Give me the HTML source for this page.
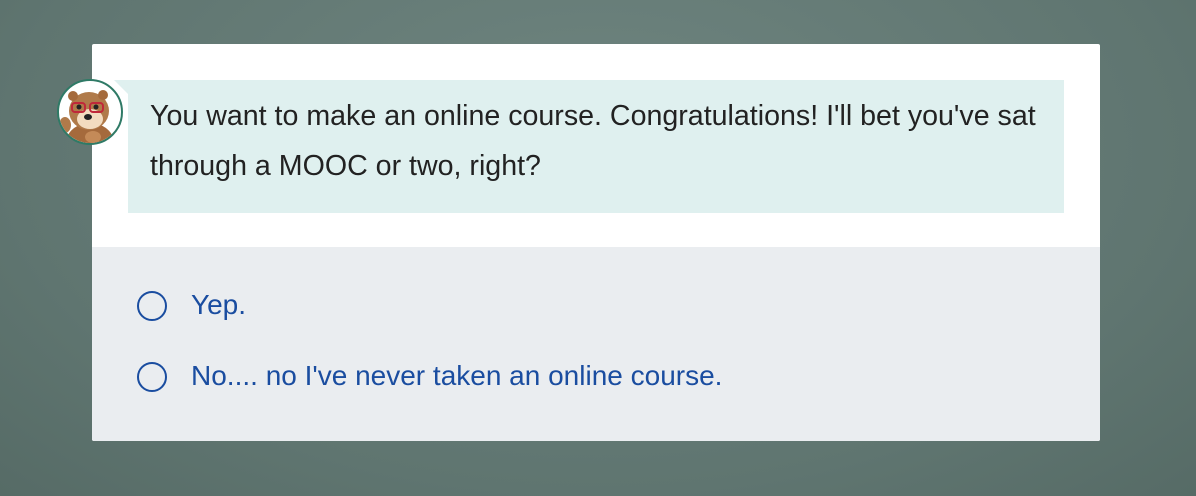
<!DOCTYPE html>
<html><head><style>
body{margin:0;width:1196px;height:496px;overflow:hidden;background:radial-gradient(ellipse at 50% 30%,#6f8580,#5f7570 70%,#566b66);font-family:"Liberation Sans",sans-serif;position:relative}
.card{position:absolute;left:92px;top:44px;width:1008px;height:397px;background:#fff;border-radius:2px;overflow:hidden}
.bottom{position:absolute;left:0;top:203px;width:1008px;height:194px;background:#eaedf0}
.bubble{position:absolute;left:36px;top:36px;width:936px;height:133px;background:#dff0ef}
.tail{position:absolute;left:22px;top:36px;width:0;height:0;border-top:14px solid #dff0ef;border-left:14px solid transparent}
.txt{position:absolute;left:58px;top:47px;width:910px;font-size:28.6px;line-height:50px;color:#222}
.av{position:absolute;left:57px;top:79px;width:62px;height:62px;border-radius:50%;border:2px solid #2f7a66;background:#fff;overflow:hidden}
.opt{position:absolute;left:137px;font-size:28px;color:#1a4da0}
.opt i{position:absolute;left:0;top:0;width:30px;height:30px;border:2px solid #1a4da0;border-radius:50%;box-sizing:border-box}
.opt span{position:absolute;left:54px;top:-2px;white-space:nowrap}
</style></head><body>
<div class="card">
<div class="tail"></div>
<div class="bubble"></div>
<div class="txt">You want to make an online course. Congratulations! I'll bet you've sat through a MOOC or two, right?</div>
<div class="bottom"></div>
</div>
<div class="av"><svg width="62" height="62" viewBox="0 0 62 62">
<ellipse cx="31" cy="62" rx="24" ry="20" fill="#a56a3c"/>
<ellipse cx="30" cy="30" rx="20" ry="19" fill="#b07a4a"/>
<circle cx="14" cy="15" r="5" fill="#a56a3c"/><circle cx="44" cy="14" r="5" fill="#a56a3c"/>
<ellipse cx="31" cy="38" rx="13" ry="10" fill="#f3dcc0"/>
<rect x="13" y="22" width="13" height="9" rx="3" fill="none" stroke="#c0283a" stroke-width="2"/>
<rect x="31" y="22" width="13" height="9" rx="3" fill="none" stroke="#c0283a" stroke-width="2"/>
<circle cx="20" cy="26" r="2.5" fill="#222"/><circle cx="37" cy="26" r="2.5" fill="#222"/>
<ellipse cx="29" cy="36" rx="4" ry="3" fill="#222"/>
<ellipse cx="6" cy="44" rx="6" ry="8" fill="#b07a4a"/>
<ellipse cx="34" cy="56" rx="8" ry="6" fill="#c48a58"/>
</svg></div>
<div class="opt" style="top:291px"><i></i><span>Yep.</span></div>
<div class="opt" style="top:362px"><i></i><span>No.... no I've never taken an online course.</span></div>
</body></html>
